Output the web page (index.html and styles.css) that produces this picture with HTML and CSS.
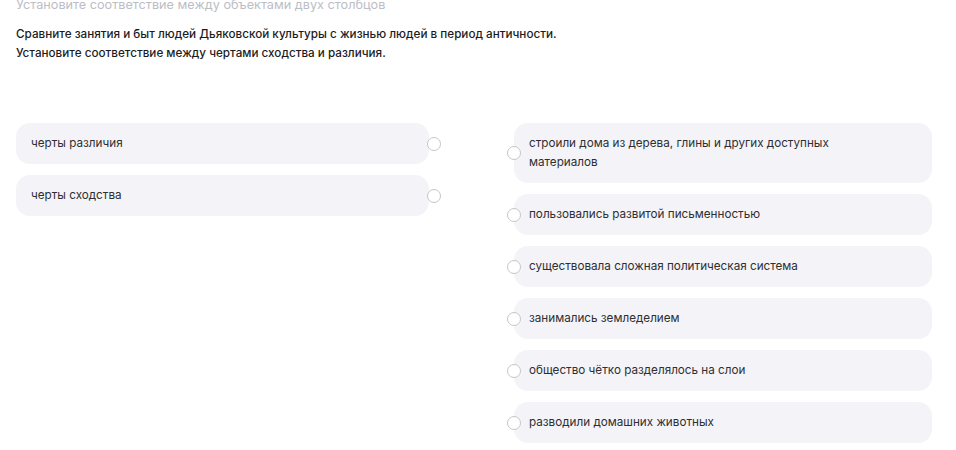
FILE: index.html
```html
<!DOCTYPE html>
<html>
<head>
    <meta charset="utf-8">
    <meta name="viewport" content="width=device-width, initial-scale=1">
    <title>Соответствие</title>
    <link rel="stylesheet" href="styles.css">
</head>
<body>
    <div class="task">
        <p class="task-type">Установите соответствие между объектами двух столбцов</p>

        <div class="question">
            <p>Сравните занятия и быт людей Дьяковской культуры с жизнью людей в период античности.</p>
            <p>Установите соответствие между чертами сходства и различия.</p>
        </div>

        <div class="columns">
            <div class="column column-left">
                <div class="item">
                    <div class="card">черты различия</div>
                    <span class="radio"></span>
                </div>
                <div class="item">
                    <div class="card">черты сходства</div>
                    <span class="radio"></span>
                </div>
            </div>

            <div class="column column-right">
                <div class="item">
                    <span class="radio"></span>
                    <div class="card">строили дома из дерева, глины и других доступных<br>материалов</div>
                </div>
                <div class="item">
                    <span class="radio"></span>
                    <div class="card">пользовались развитой письменностью</div>
                </div>
                <div class="item">
                    <span class="radio"></span>
                    <div class="card">существовала сложная политическая система</div>
                </div>
                <div class="item">
                    <span class="radio"></span>
                    <div class="card">занимались земледелием</div>
                </div>
                <div class="item">
                    <span class="radio"></span>
                    <div class="card">общество чётко разделялось на слои</div>
                </div>
                <div class="item">
                    <span class="radio"></span>
                    <div class="card">разводили домашних животных</div>
                </div>
            </div>
        </div>
    </div>
</body>
</html>
```

FILE: styles.css
```css
body {
    margin: 0;
    font-family: Inter, "Noto Sans", sans-serif;
    background-color: #ffffff;
    color: #2b2b2e;
    overflow: hidden;
}

p {
    margin: 0;
}

.task {
    padding: 0 16px;
}

.task-type {
    margin-top: -3px;
    font-size: 12.7px;
    line-height: 15px;
    color: #bdbdc6;
}

.question {
    margin-top: 13px;
    font-size: 11.7px;
    line-height: 19px;
    font-weight: 500;
    color: #1c1c1e;
}

.columns {
    display: flex;
    justify-content: space-between;
    margin-top: 60px;
}

.column {
    display: flex;
    flex-direction: column;
    gap: 11px;
}

.column-left {
    width: 425px;
}

.column-right {
    width: 418px;
    margin-right: 8px;
}

.item {
    position: relative;
    display: flex;
}

.card {
    flex: 1;
    background-color: #f4f4f8;
    border-radius: 14px;
    padding: 11px 14px 11px 15px;
    font-size: 11.7px;
    line-height: 19px;
    color: #2e2e33;
}

.column-left .card {
    margin-right: 12px;
}

.radio {
    position: absolute;
    top: 50%;
    width: 14px;
    height: 14px;
    margin-top: -7px;
    box-sizing: border-box;
    border: 1.5px solid #c6c6ca;
    border-radius: 50%;
    background-color: #ffffff;
}

.column-left .radio {
    right: 0;
}

.column-right .radio {
    left: -7px;
}
```
